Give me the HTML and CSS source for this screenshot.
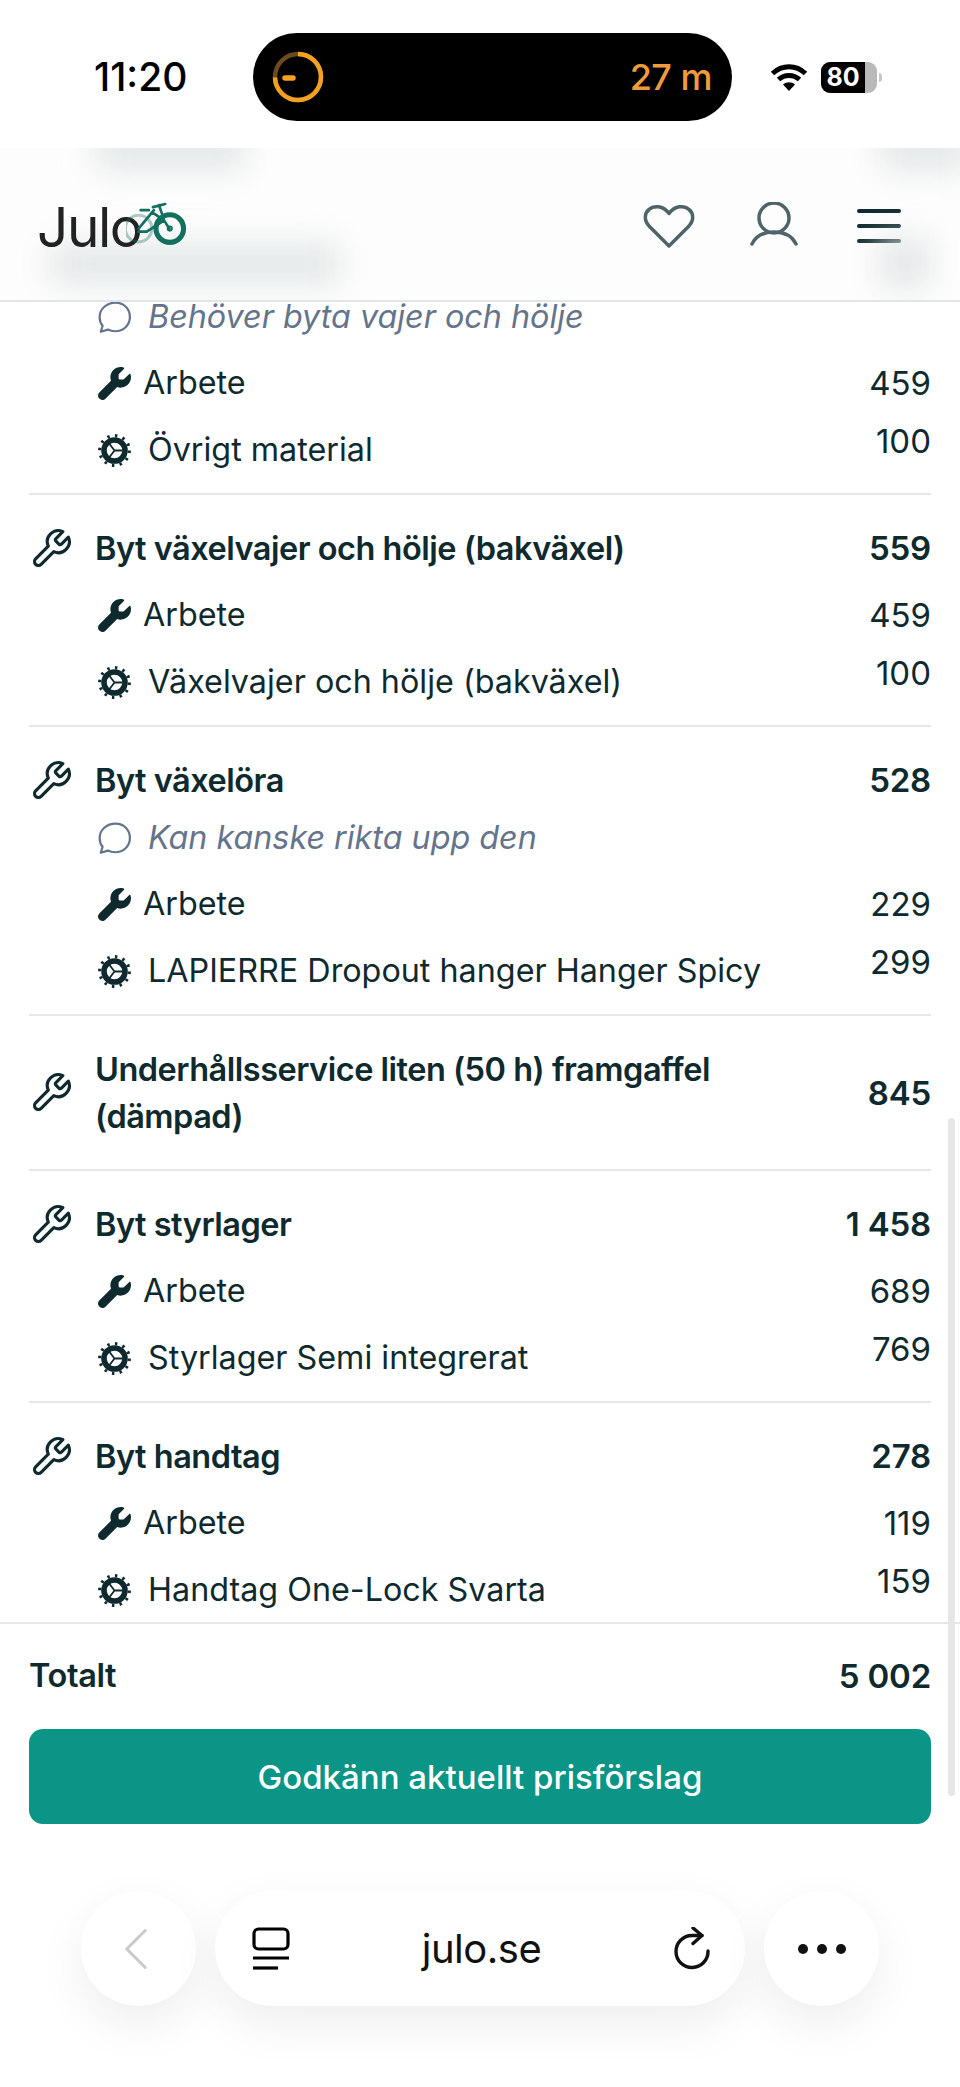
FILE: index.html
```html
<!DOCTYPE html>
<html lang="sv">
<head>
<meta charset="utf-8">
<title>Julo</title>
<link rel="stylesheet" href="styles.css">
</head>
<body>
<svg class="defs" aria-hidden="true">
  <symbol id="tool" viewBox="0 0 24 24"><path fill="none" stroke="currentColor" stroke-width="1.7" stroke-linecap="round" stroke-linejoin="round" d="M14.7 6.3a1 1 0 0 0 0 1.4l1.6 1.6a1 1 0 0 0 1.4 0l3.77-3.77a6 6 0 0 1-7.94 7.94l-6.91 6.91a2.12 2.12 0 0 1-3-3l6.91-6.91a6 6 0 0 1 7.94-7.94l-3.76 3.76z"/></symbol>
  <symbol id="wrench" viewBox="0 0 512 512"><path fill="currentColor" d="M352 320c88.400 0 160-71.600 160-160c0-15.300-2.200-30.100-6.100-44.100c-3.100-10.900-16.400-13.200-24.300-5.200l-76.800 76.800c-3 3-7.100 4.700-11.300 4.700H336c-8.800 0-16-7.200-16-16V118.600c0-4.200 1.700-8.300 4.700-11.300l76.800-76.800c8-8 5.700-21.300-5.200-24.300C382.300 2.200 367.500 0 352 0C263.600 0 192 71.600 192 160c0 19.100 3.400 37.500 9.500 54.500L19.900 396.100C7.200 408.800 0 426.100 0 444.100C0 481.600 30.400 512 67.900 512c18 0 35.300-7.200 48-19.900L297.500 310.500c17 6.200 35.400 9.500 54.500 9.500z"/></symbol>
  <symbol id="gear" viewBox="0 0 32 32">
    <circle cx="16" cy="16" r="14.400" fill="none" stroke="currentColor" stroke-width="3" stroke-dasharray="2.400 5.140"/>
    <circle cx="16" cy="16" r="10.200" fill="none" stroke="currentColor" stroke-width="5.400"/>
    <path fill="none" stroke="currentColor" stroke-width="1.800" d="M16 16 11 9.500M16 16 11 22.500M16 16h8"/>
  </symbol>
  <symbol id="bubble" viewBox="1 1 30 30"><path fill="none" stroke="currentColor" stroke-width="2" stroke-linejoin="round" d="M17 2.500c7.500 0 13 5.500 13 13s-6 13-13.500 13c-2.500 0-4.500-.5-6.500-1.500l-6.500 2 1.700-5.500C3 21 2.500 18.500 2.500 15.500 2.500 8 9 2.500 17 2.500z"/></symbol>
</svg>

<div class="app">
  <div class="status">
    <span class="time">11:20</span>
    <div class="island">
      <svg class="ring" viewBox="0 0 52 52">
        <circle cx="26" cy="26" r="23" fill="none" stroke="#6d4a1c" stroke-width="4.500"/>
        <path fill="none" stroke="#f5a01f" stroke-width="4.500" d="M26 3a23 23 0 1 1-23 23.500"/>
        <path stroke="#f5a01f" stroke-width="5.500" stroke-linecap="round" d="M13 27h8"/>
      </svg>
      <span class="eta">27 m</span>
    </div>
    <div class="sys">
      <svg class="wifi" viewBox="0 0 38 28">
        <path fill="none" stroke="#000" stroke-width="5" d="M2.500 10.500c9.500-9 23.500-9 33 0M8.500 16.500c6-5.500 15-5.500 21 0"/>
        <path d="M13 21.500c3.500-3 8.500-3 12 0l-6 6.500z"/>
      </svg>
      <div class="battery"><span class="level">80</span><span class="rest"></span></div>
      <span class="nub"></span>
    </div>
  </div>

  <header class="site">
    <span class="smear s1"></span><span class="smear s2"></span><span class="smear s3"></span><span class="smear s4"></span>
    <div class="logo">
      <span class="word">Julo</span>
      <svg class="bike" viewBox="0 0 60 44" fill="none" stroke="#13705f" stroke-linecap="round" stroke-linejoin="round">
        <circle cx="42.500" cy="26" r="13.500" stroke-width="5"/>
        <circle cx="42.500" cy="26" r="2" stroke-width="2"/>
        <circle cx="12" cy="26" r="13" stroke-width="3" opacity=".35"/>
        <path stroke-width="2.600" d="M12 26 27 8M14 8h8M25 10l12 8-17 11H12M37 18l-5-15M26 5l12-3M37 18l5 8"/>
      </svg>
    </div>
    <div class="head-icons">
      <svg class="heart" viewBox="0 0 52 44"><path fill="none" stroke="#4f6468" stroke-width="3.500" stroke-linejoin="round" d="M26 42 6.500 22.500C.5 16.500 1.500 9 6 5.500 11 1 20 1.500 26 9.500 32 1.500 41 1 46 5.500 50.500 9 51.500 16.500 45.500 22.500z"/></svg>
      <svg class="person" viewBox="0 0 48 46"><g fill="none" stroke="#4f6468" stroke-width="3.500" stroke-linecap="round"><circle cx="24" cy="16" r="15"/><path d="M2 42c4-8 12-12 22-12s18 4 22 12"/></g></svg>
      <div class="burger"><i></i><i></i><i></i></div>
    </div>
  </header>

  <main class="list">
    <div class="scroll">
      <section class="item first">
        <div class="note"><svg class="ic"><use href="#bubble"/></svg><span>Behöver byta vajer och hölje</span></div>
        <div class="row"><svg class="ic"><use href="#wrench"/></svg><span class="lab lab-w">Arbete</span><span class="price">459</span></div>
        <div class="row"><svg class="ic"><use href="#gear"/></svg><span class="lab">Övrigt material</span><span class="price up">100</span></div>
      </section>
      <section class="item">
        <div class="head"><svg class="tool"><use href="#tool"/></svg><span class="title">Byt växelvajer och hölje (bakväxel)</span><span class="sum">559</span></div>
        <div class="row"><svg class="ic"><use href="#wrench"/></svg><span class="lab lab-w">Arbete</span><span class="price">459</span></div>
        <div class="row"><svg class="ic"><use href="#gear"/></svg><span class="lab">Växelvajer och hölje (bakväxel)</span><span class="price up">100</span></div>
      </section>
      <section class="item">
        <div class="head"><svg class="tool"><use href="#tool"/></svg><span class="title">Byt växelöra</span><span class="sum">528</span></div>
        <div class="note"><svg class="ic"><use href="#bubble"/></svg><span>Kan kanske rikta upp den</span></div>
        <div class="row"><svg class="ic"><use href="#wrench"/></svg><span class="lab lab-w">Arbete</span><span class="price">229</span></div>
        <div class="row"><svg class="ic"><use href="#gear"/></svg><span class="lab">LAPIERRE Dropout hanger Hanger Spicy</span><span class="price up">299</span></div>
      </section>
      <section class="item solo">
        <div class="head"><svg class="tool"><use href="#tool"/></svg><span class="title">Underhållsservice liten (50 h) framgaffel (dämpad)</span><span class="sum">845</span></div>
      </section>
      <section class="item">
        <div class="head"><svg class="tool"><use href="#tool"/></svg><span class="title">Byt styrlager</span><span class="sum">1 458</span></div>
        <div class="row"><svg class="ic"><use href="#wrench"/></svg><span class="lab lab-w">Arbete</span><span class="price">689</span></div>
        <div class="row"><svg class="ic"><use href="#gear"/></svg><span class="lab">Styrlager Semi integrerat</span><span class="price up">769</span></div>
      </section>
      <section class="item">
        <div class="head"><svg class="tool"><use href="#tool"/></svg><span class="title">Byt handtag</span><span class="sum">278</span></div>
        <div class="row"><svg class="ic"><use href="#wrench"/></svg><span class="lab lab-w">Arbete</span><span class="price">119</span></div>
        <div class="row"><svg class="ic"><use href="#gear"/></svg><span class="lab">Handtag One-Lock Svarta</span><span class="price up">159</span></div>
      </section>
    </div>
  </main>

  <footer class="foot">
    <div class="total"><span>Totalt</span><span class="total-sum">5 002</span></div>
    <button class="cta">Godkänn aktuellt prisförslag</button>
  </footer>

  <span class="scrollbar"></span>

  <nav class="browser">
    <div class="round">
      <svg class="back" viewBox="0 0 26 44"><path fill="none" stroke="#c9c9c9" stroke-width="3.200" stroke-linecap="round" stroke-linejoin="round" d="M23 2 3 22l20 20"/></svg>
    </div>
    <div class="url">
      <svg class="tabs" viewBox="0 0 38 44" fill="none" stroke="#000" stroke-width="3.200"><rect x="2" y="2" width="34" height="20" rx="4.500"/><path stroke-width="3" d="M1 31h36"/><path stroke-width="3.200" d="M1 41h25"/></svg>
      <span class="host">julo.se</span>
      <svg class="reload" viewBox="0 0 38 44" fill="none" stroke="#111" stroke-width="3.400" stroke-linecap="round" stroke-linejoin="round"><path d="M35 24a16 16 0 1 1-16-15.500h10"/><path d="M20 1l9 7.500-9 8"/></svg>
    </div>
    <div class="round">
      <div class="dots"><i></i><i></i><i></i></div>
    </div>
  </nav>
</div>
</body>
</html>
```

FILE: styles.css
```css
* { box-sizing: border-box; }
html, body { margin: 0; padding: 0; background: #fff; }
body { font-family: Inter, "Liberation Sans", sans-serif; color: #0f2a2e; }
.defs { display: none; }

.app { position: relative; width: 960px; height: 2087px; overflow: hidden; display: flex; flex-direction: column; background: #fff; }

/* status bar */
.status { height: 148px; flex: none; display: flex; align-items: flex-start; background: #fff; padding-top: 33px; }
.time { width: 253px; padding-left: 94px; padding-top: 22px; font-size: 39px; line-height: 44px; font-weight: 500; color: #000; letter-spacing: 0; }
.island { width: 479px; height: 88px; border-radius: 44px; background: #000; display: flex; align-items: center; justify-content: space-between; padding: 0 20px 0 19px; }
.ring { width: 52px; height: 52px; }
.eta { font-size: 36px; font-weight: 500; color: #f09a3e; letter-spacing: -.5px; }
.sys { display: flex; align-items: center; height: 88px; padding-left: 38px; }
.wifi { width: 38px; height: 28px; }
.battery { width: 56px; height: 31px; margin-left: 13px; border-radius: 9px; overflow: hidden; display: flex; background: #b9b9b9; }
.level { width: 44px; background: #000; color: #fff; font-size: 25px; font-weight: 700; line-height: 31px; text-align: center; }
.rest { flex: 1; }
.nub { width: 3px; height: 9px; margin-left: 2px; border-radius: 0 3px 3px 0; background: #c8c8c8; }

/* site header */
.site { position: relative; height: 154px; flex: none; background: #fdfdfd; border-bottom: 2px solid #e2e5e8; overflow: hidden; display: flex; align-items: flex-start; justify-content: space-between; padding: 54px 59px 0 37px; }
.smear { position: absolute; background: #e3e7e7; filter: blur(16px); }
.s1 { left: 95px; top: -20px; width: 150px; height: 42px; }
.s2 { left: 880px; top: -20px; width: 90px; height: 42px; }
.s3 { left: 50px; top: 96px; width: 290px; height: 40px; }
.s4 { left: 880px; top: 90px; width: 50px; height: 50px; }
.logo { position: relative; width: 150px; height: 50px; }
.word { display: block; font-size: 55px; line-height: 50px; font-weight: 400; color: #222; letter-spacing: -1.5px; }
.bike { position: absolute; left: 89px; top: 0; width: 62px; height: 45px; }
.head-icons { display: flex; align-items: flex-start; }
.heart { width: 52px; height: 44px; margin-top: 2px; }
.person { width: 48px; height: 46px; margin-left: 55px; }
.burger { width: 44px; margin-left: 59px; margin-top: 7px; display: flex; flex-direction: column; gap: 11.500px; }
.burger i { display: block; height: 3.500px; border-radius: 2px; background: #0f2a2e; }

/* list */
.list { height: 1320px; flex: none; overflow: hidden; padding: 0 29px; }
.scroll { margin-top: -3px; }
.item { padding: 30px 0 25px; border-bottom: 2px solid #e5e7eb; }
.item.first { padding-top: 0; }
.item:last-child { border-bottom: 0; }
.item.solo { padding-bottom: 29px; }
.item.solo .title { padding-right: 100px; }

.head { display: flex; align-items: center; font-size: 32.500px; line-height: 47px; font-weight: 600; letter-spacing: -.5px; }
.tool { width: 44px; height: 44px; flex: none; margin-right: 22px; color: #0f2a2e; }
.title { flex: 1; }
.sum { flex: none; font-size: 33px; letter-spacing: -.2px; }

.head + .row { margin-top: 25px; }
.head + .note { margin-top: 16px; }
.note + .row { margin-top: 30px; }
.row { display: flex; align-items: center; margin-top: 31px; padding-left: 69px; font-size: 32.300px; line-height: 36px; }
.note { display: flex; align-items: center; padding-left: 69px; font-size: 32.300px; line-height: 36px; font-style: italic; color: #64748b; }
.ic { width: 33px; height: 33px; flex: none; margin-right: 17px; color: #0f2a2e; }
.note .ic { color: #64748b; }
.lab { flex: 1; }
.lab-w { margin-left: -5px; }
.price { flex: none; font-size: 33px; }
.price.up { position: relative; top: -9px; }

/* footer */
.foot { flex: 1; padding: 30px 29px 0; background: #fff; border-top: 2px solid #e5e7eb; }
.total { display: flex; justify-content: space-between; font-size: 32.500px; line-height: 44px; font-weight: 600; letter-spacing: -.4px; }
.total-sum { font-size: 33px; letter-spacing: -.2px; }
.cta { display: block; width: 100%; height: 95px; margin-top: 31px; border: 0; border-radius: 14px; background: #0b9586; color: #fff; font-family: inherit; font-size: 33px; font-weight: 500; }

.scrollbar { position: absolute; left: 948px; top: 1118px; width: 7px; height: 678px; border-radius: 4px; background: #e4e6e8; }

/* browser chrome */
.browser { position: absolute; left: 81px; top: 1891px; display: flex; gap: 19px; }
.round, .url { height: 115px; background: #fff; box-shadow: 0 18px 50px rgba(0, 0, 0, .07); }
.round { width: 115px; border-radius: 50%; display: flex; align-items: center; justify-content: center; }
.url { width: 530px; border-radius: 58px; display: flex; align-items: center; justify-content: space-between; padding: 0 34px 0 37px; }
.back { width: 24px; height: 44px; margin-right: 6px; }
.tabs { width: 38px; height: 44px; }
.reload { width: 38px; height: 44px; }
.host { font-size: 40px; font-weight: 400; color: #111; letter-spacing: -.5px; }
.dots { display: flex; gap: 9px; }
.dots i { display: block; width: 10px; height: 10px; border-radius: 50%; background: #111; }
```
